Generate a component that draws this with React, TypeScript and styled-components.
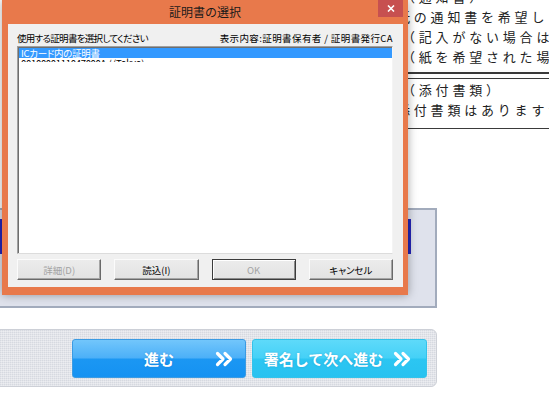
import React from "react";
import styled, { createGlobalStyle } from "styled-components";

const GlobalStyle = createGlobalStyle`
  html, body {
    margin: 0;
    padding: 0;
    background: #fff;
  }
  body {
    font-family: "Noto Sans CJK JP", "Noto Sans", sans-serif;
  }
`;

const Screen = styled.div`
  position: relative;
  width: 549px;
  height: 406px;
  overflow: hidden;
  background: #fff;
`;

/* ---------- page behind the dialog ---------- */

const Page = styled.div`
  display: flex;
  flex-direction: column;
  margin-top: -13px;
`;

const TextArea = styled.div`
  margin-left: 380px;
  display: flex;
  flex-direction: column;
`;

const NoticeBlock = styled.div`
  padding-bottom: 5px;
  border-bottom: 2px solid #3a3a3a;
`;

const AttachBlock = styled.div`
  margin-top: 4px;
  padding: 1px 0 8px;
  border-top: 1px solid #3a3a3a;
  border-bottom: 1px solid #3a3a3a;
`;

const Line = styled.div<{ $indent: number }>`
  padding-left: ${(p) => p.$indent}px;
  height: 20px;
  line-height: 20px;
  font-size: 13px;
  letter-spacing: 3.8px;
  color: #222;
  white-space: nowrap;
`;

const Panel = styled.div`
  margin: 79px 0 0 -10px;
  width: 447px;
  height: 100px;
  box-sizing: border-box;
  border: 2px solid #a2abbc;
  background: #dfe2ec;
  padding: 9px 24px 0 0;
`;

const BlueBar = styled.div`
  height: 35px;
  background: #2424b8;
`;

const Footer = styled.div`
  margin: 21px 0 0 -10px;
  width: 447px;
  height: 58px;
  box-sizing: border-box;
  border-radius: 0 6px 6px 0;
  border: 1px solid #cdd0d7;
  background-color: #d6d9e0;
  background-image: repeating-linear-gradient(
      0deg,
      rgba(255, 255, 255, 0.35) 0 1px,
      transparent 1px 2px
    ),
    repeating-linear-gradient(
      90deg,
      rgba(255, 255, 255, 0.3) 0 1px,
      transparent 1px 2px
    );
  display: flex;
  justify-content: flex-end;
  align-items: flex-start;
  gap: 6px;
  padding: 9px 9px 0 0;
`;

const NavButton = styled.div<{ $tone: "blue" | "cyan"; $width: number; $spread?: boolean }>`
  width: ${(p) => p.$width}px;
  height: 39px;
  box-sizing: border-box;
  border-radius: 3px;
  border: 1px solid ${(p) => (p.$tone === "blue" ? "#3b9be3" : "#33c3ea")};
  background: ${(p) =>
    p.$tone === "blue"
      ? "linear-gradient(#72c6fb 0%, #4cb0f8 48%, #1b97f3 52%, #1592f2 100%)"
      : "linear-gradient(#5edaf9 0%, #45d1f7 48%, #2cc6f2 52%, #28c2f0 100%)"};
  display: flex;
  align-items: center;
  justify-content: center;
  gap: 10px;
  padding: ${(p) => (p.$spread ? "0 12px 0 40px" : "0 4px 0 0")};
  color: #fff;
  font-size: 15px;
  font-weight: 700;
  text-shadow: 0 0 2px rgba(0, 60, 120, 0.25);
`;

const NavLabel = styled.span<{ $spread?: boolean }>`
  flex: ${(p) => (p.$spread ? 1 : "none")};
  text-align: center;
  white-space: nowrap;
`;

const Chevrons = () => (
  <svg width="18" height="16" viewBox="0 0 18 16">
    <path
      d="M2.5 2.5l5.5 5.5-5.5 5.5M10 2.5l5.5 5.5-5.5 5.5"
      fill="none"
      stroke="#fff"
      strokeWidth="3.2"
      strokeLinecap="round"
      strokeLinejoin="round"
    />
  </svg>
);

/* ---------- dialog ---------- */

const Dialog = styled.div`
  position: absolute;
  top: 0;
  left: 2px;
  width: 406px;
  height: 295px;
  background: #e8794b;
  box-shadow: 0 0 9px rgba(0, 0, 0, 0.35);
  display: flex;
  flex-direction: column;
  z-index: 2;
`;

const TitleBar = styled.div`
  height: 24px;
  display: grid;
  grid-template-columns: 1fr auto 1fr;
  align-items: start;
`;

const Title = styled.div`
  grid-column: 2;
  font-size: 12px;
  line-height: 24px;
  color: #1a1a1a;
`;

const CloseButton = styled.div`
  grid-column: 3;
  justify-self: end;
  margin-right: 5px;
  width: 25px;
  height: 17px;
  background: #c75050;
  display: flex;
  align-items: center;
  justify-content: center;
`;

const Body = styled.div`
  flex: 1;
  margin: 0 5px 8px 6px;
  background: #f0f0f0;
  padding: 8px 10px 7px 9px;
  display: flex;
  flex-direction: column;
  font-size: 9.5px;
  font-feature-settings: "palt";
  color: #000;
`;

const LabelRow = styled.div`
  height: 12px;
  line-height: 12px;
  display: flex;
  justify-content: space-between;
  white-space: nowrap;
`;

const Label = styled.span<{ $spacing: number }>`
  letter-spacing: ${(p) => p.$spacing}px;
`;

const ListBox = styled.div`
  margin-top: 2px;
  height: 208px;
  box-sizing: border-box;
  background: #fff;
  border-style: solid;
  border-width: 1px;
  border-color: #a0a0a0 #f4f4f4 #dcdcdc #a0a0a0;
  box-shadow: inset 1px 1px 0 #6e6e6e;
  padding: 1px 0 0 1px;
  display: flex;
  flex-direction: column;
`;

const ListRow = styled.div<{ $selected?: boolean; $clip?: number }>`
  height: ${(p) => (p.$clip ? `${p.$clip}px` : "10px")};
  overflow: hidden;
  line-height: 10px;
  padding-left: 2px;
  white-space: nowrap;
  letter-spacing: -0.3px;
  background: ${(p) => (p.$selected ? "#3399ff" : "transparent")};
  color: ${(p) => (p.$selected ? "#fff" : "#000")};
`;

const ButtonRow = styled.div`
  margin-top: 5px;
  height: 21px;
  display: grid;
  grid-template-columns: repeat(4, 1fr);
  gap: 13px;
`;

const DlgButton = styled.div<{ $disabled?: boolean; $default?: boolean }>`
  box-sizing: border-box;
  height: 21px;
  display: flex;
  align-items: center;
  justify-content: center;
  background: linear-gradient(#ececec, #e2e2e2);
  border: 1px solid;
  border-color: ${(p) =>
    p.$default ? "#3c3c3c" : "#fbfbfb #6a6a6a #6a6a6a #fbfbfb"};
  box-shadow: ${(p) =>
    p.$default
      ? "inset 1px 1px 0 #fff, inset -1px -1px 0 #8a8a8a"
      : "inset -1px -1px 0 #a5a5a5"};
  color: ${(p) => (p.$disabled ? "#a3a3a3" : "#000")};
  white-space: nowrap;
`;

export default function App() {
  return (
    <Screen>
      <GlobalStyle />
      <Page>
        <TextArea>
          <NoticeBlock>
            <Line $indent={22}>（通知書）</Line>
            <Line $indent={17}>紙の通知書を希望しますか</Line>
            <Line $indent={22}>（記入がない場合は、電子</Line>
            <Line $indent={22}>（紙を希望された場合</Line>
          </NoticeBlock>
          <AttachBlock>
            <Line $indent={22}>（添付書類）</Line>
            <Line $indent={17}>添付書類はありますか</Line>
          </AttachBlock>
        </TextArea>
        <Panel>
          <BlueBar />
        </Panel>
        <Footer>
          <NavButton $tone="blue" $width={174} $spread>
            <NavLabel $spread>進む</NavLabel>
            <Chevrons />
          </NavButton>
          <NavButton $tone="cyan" $width={175}>
            <NavLabel>署名して次へ進む</NavLabel>
            <Chevrons />
          </NavButton>
        </Footer>
      </Page>

      <Dialog>
        <TitleBar>
          <Title>証明書の選択</Title>
          <CloseButton>
            <svg width="8" height="7" viewBox="0 0 8 7">
              <path
                d="M1 0.5l6 6M7 0.5l-6 6"
                stroke="#fff"
                strokeWidth="1.6"
                fill="none"
              />
            </svg>
          </CloseButton>
        </TitleBar>
        <Body>
          <LabelRow>
            <Label $spacing={-0.7}>使用する証明書を選択してください</Label>
            <Label $spacing={0.4}>表示内容:証明書保有者 / 証明書発行CA</Label>
          </LabelRow>
          <ListBox>
            <ListRow $selected>ICカード内の証明書</ListRow>
            <ListRow $clip={4}>0010000111047000A / (Tokyo)</ListRow>
          </ListBox>
          <ButtonRow>
            <DlgButton $disabled>詳細(D)</DlgButton>
            <DlgButton>読込(I)</DlgButton>
            <DlgButton $disabled $default>
              OK
            </DlgButton>
            <DlgButton>キャンセル</DlgButton>
          </ButtonRow>
        </Body>
      </Dialog>
    </Screen>
  );
}
